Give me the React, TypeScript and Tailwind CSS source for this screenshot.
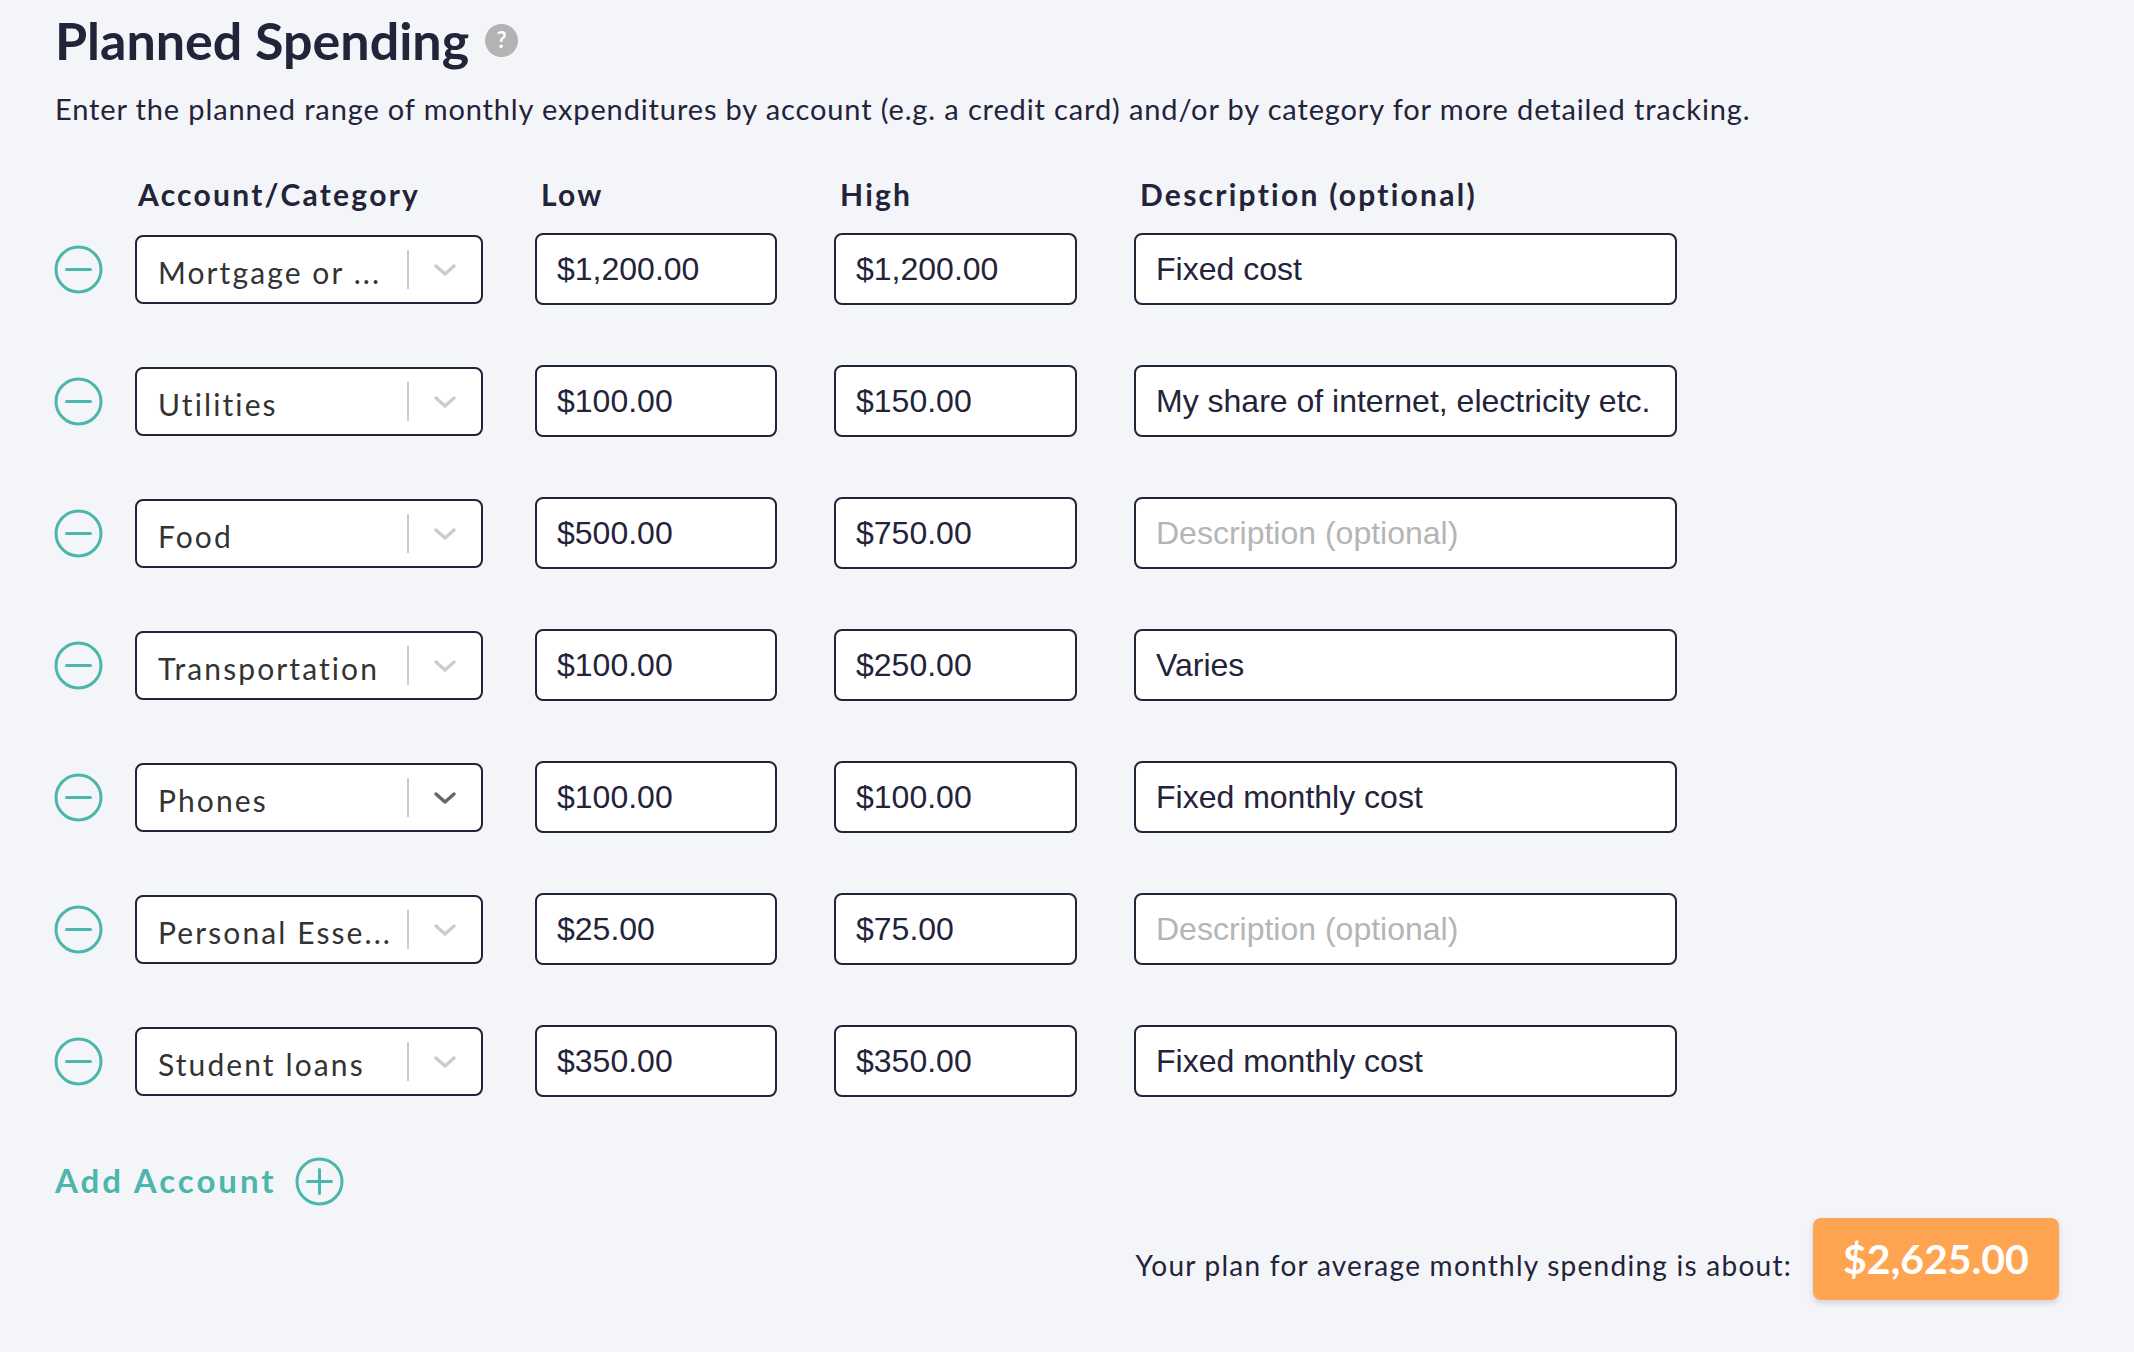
import React from 'react';

type Row = { account: string; low: string; high: string; desc: string; active?: boolean };

const rows: Row[] = [
  { account: 'Mortgage or ...', low: '$1,200.00', high: '$1,200.00', desc: 'Fixed cost' },
  { account: 'Utilities', low: '$100.00', high: '$150.00', desc: 'My share of internet, electricity etc.' },
  { account: 'Food', low: '$500.00', high: '$750.00', desc: '' },
  { account: 'Transportation', low: '$100.00', high: '$250.00', desc: 'Varies' },
  { account: 'Phones', low: '$100.00', high: '$100.00', desc: 'Fixed monthly cost', active: true },
  { account: 'Personal Esse...', low: '$25.00', high: '$75.00', desc: '' },
  { account: 'Student loans', low: '$350.00', high: '$350.00', desc: 'Fixed monthly cost' },
];

function CircleIcon({ plus }: { plus?: boolean }) {
  return (
    <svg width="49" height="49" viewBox="0 0 49 49" fill="none" stroke="#4db6ac" strokeWidth="3" strokeLinecap="round">
      <circle cx="24.5" cy="24.5" r="22.5" />
      <line x1="12.5" y1="24.5" x2="36.5" y2="24.5" />
      {plus && <line x1="24.5" y1="12.5" x2="24.5" y2="36.5" />}
    </svg>
  );
}

function Chevron({ dark }: { dark?: boolean }) {
  return (
    <svg width="24" height="14" viewBox="0 0 24 14" fill="none" stroke={dark ? '#666666' : '#cccccc'} strokeWidth="3.5" strokeLinecap="round" strokeLinejoin="round">
      <path d="M3 3l9 8 9-8" />
    </svg>
  );
}

const inputCls =
  'h-[72px] w-full rounded-[8px] border-2 border-[#23233a] bg-white px-[20px] text-[32px] text-[#23233a] outline-none placeholder:text-[#b5b5b5] font-["Liberation_Sans",Arial,sans-serif]';

export default function App() {
  return (
    <div className="min-h-screen bg-[#f4f5f8] pl-[55px] pt-[10px] font-['Lato',sans-serif] text-[#23233a]">
      <h1 className="flex items-center gap-[16px] text-[52px] font-bold leading-[60px]">
        Planned Spending
        <span className="flex h-[33px] w-[33px] items-center justify-center rounded-full bg-[#b3b3b3] text-[22px] font-bold leading-none text-white">
          ?
        </span>
      </h1>
      <p className="mt-[21px] text-[29px] leading-[36px] tracking-[0.03em]">
        Enter the planned range of monthly expenditures by account (e.g. a credit card) and/or by category for more detailed tracking.
      </p>

      <div className="mt-[49px] grid grid-cols-[80px_400px_299px_300px_543px] text-[30px] font-bold leading-[36px] tracking-[0.075em]">
        <div />
        <div className="pl-[3px]">Account/Category</div>
        <div className="pl-[6px]">Low</div>
        <div className="pl-[6px]">High</div>
        <div className="pl-[6px]">Description (optional)</div>
      </div>

      <div className="mt-[21px] flex flex-col gap-[60px]">
        {rows.map((r) => (
          <div key={r.account} className="grid h-[72px] grid-cols-[80px_400px_299px_300px_543px] items-center">
            <div className="-ml-px flex items-center">
              <CircleIcon />
            </div>
            <div className="flex h-[69px] w-[348px] items-center rounded-[8px] border-2 border-[#23233a] bg-white">
              <span className="flex-1 pl-[21px] pt-[6px] text-[30px] tracking-[0.07em] text-[#333333]">{r.account}</span>
              <span className="h-[39px] w-[2px] bg-[#cccccc]" />
              <span className="flex w-[72px] justify-center pt-[2px]">
                <Chevron dark={r.active} />
              </span>
            </div>
            <div className="w-[242px]">
              <input className={inputCls} defaultValue={r.low} />
            </div>
            <div className="w-[243px]">
              <input className={inputCls} defaultValue={r.high} />
            </div>
            <div className="w-[543px]">
              <input className={inputCls} defaultValue={r.desc} placeholder="Description (optional)" />
            </div>
          </div>
        ))}
      </div>

      <div className="mt-[60px] flex h-[48px] items-center gap-[18px]">
        <span className="text-[33px] font-bold tracking-[0.09em] text-[#4db6ac]">Add Account</span>
        <CircleIcon plus />
      </div>

      <div className="mt-[13px] flex items-center justify-end gap-[21px] pr-[75px]">
        <span className="pt-[12px] text-[28px] tracking-[0.045em]">Your plan for average monthly spending is about:</span>
        <span className="flex h-[82px] w-[246px] items-center justify-center rounded-[8px] bg-[#ffa552] text-[41px] font-bold text-white shadow-[0_3px_6px_rgba(0,0,0,0.15)]">
          $2,625.00
        </span>
      </div>
    </div>
  );
}
